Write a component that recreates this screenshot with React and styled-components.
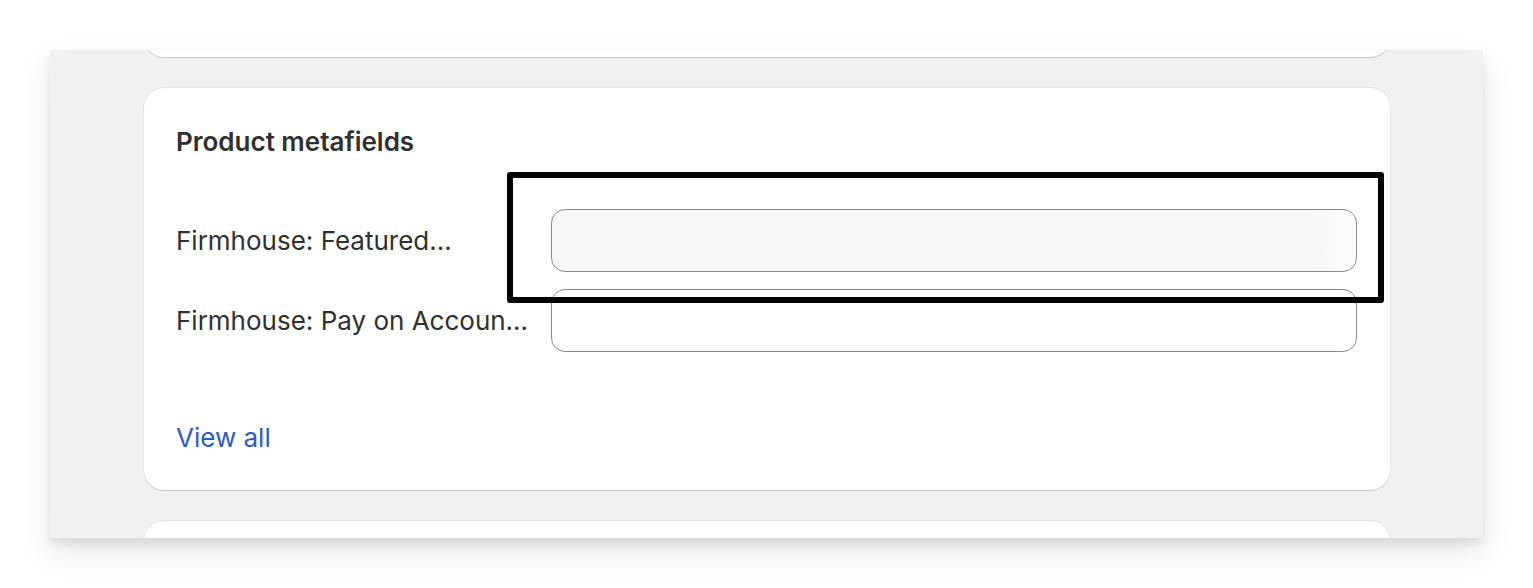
import React from "react";
import styled, { createGlobalStyle } from "styled-components";

const GlobalStyle = createGlobalStyle`
  html, body {
    margin: 0;
    padding: 0;
    background: #ffffff;
    font-family: "Inter", "Noto Sans", sans-serif;
  }
`;

const fields = [
  { label: "Firmhouse: Featured...", filled: true },
  { label: "Firmhouse: Pay on Accoun...", filled: false },
];

const App = () => {
  return (
    <>
      <GlobalStyle />
      <Page>
        <Panel>
          <Stack>
            <Card $peek="top" />
            <Card>
              <Title>Product metafields</Title>
              <FieldList>
                {fields.map((field) => (
                  <FieldRow key={field.label}>
                    <FieldLabel>{field.label}</FieldLabel>
                    <FieldInput $filled={field.filled} />
                  </FieldRow>
                ))}
              </FieldList>
              <ViewAll href="#">View all</ViewAll>
              <Highlight />
            </Card>
            <Card $peek="bottom" />
          </Stack>
        </Panel>
      </Page>
    </>
  );
};

const Page = styled.div`
  width: 1533px;
  height: 588px;
  padding: 50px 50px 0 50px;
  box-sizing: border-box;
  overflow: hidden;
`;

const Panel = styled.div`
  width: 1433px;
  height: 488px;
  background: #f1f1f1;
  overflow: hidden;
  box-shadow: 0 6px 8px rgba(0, 0, 0, 0.08), 0 14px 30px rgba(0, 0, 0, 0.1);
`;

const Stack = styled.div`
  display: flex;
  flex-direction: column;
  gap: 31px;
  padding: 0 93px 0 94px;
  margin-top: -200px;
`;

const Card = styled.div`
  position: relative;
  background: #ffffff;
  border-radius: 20px;
  box-shadow: 0 1px 0 rgba(0, 0, 0, 0.12), 0 0 0 1px rgba(0, 0, 0, 0.05);
  padding: 38px 33px 36px 32px;
  height: ${({ $peek }) => ($peek ? "207px" : "auto")};
  box-sizing: border-box;
`;

const Title = styled.h2`
  margin: 0;
  font-size: 26px;
  line-height: 32px;
  font-weight: 600;
  color: #303030;
`;

const FieldList = styled.div`
  display: flex;
  flex-direction: column;
  gap: 17px;
  margin-top: 51px;
`;

const FieldRow = styled.div`
  display: flex;
  align-items: center;
`;

const FieldLabel = styled.div`
  width: 375px;
  flex-shrink: 0;
  font-size: 26px;
  line-height: 32px;
  color: #303030;
  white-space: nowrap;
`;

const FieldInput = styled.div`
  flex: 1;
  height: 63px;
  box-sizing: border-box;
  border: 1px solid #8a8a8a;
  border-radius: 14px;
  background: ${({ $filled }) =>
    $filled
      ? "linear-gradient(90deg, #f6f6f6 0%, #f6f6f6 94%, #fdfdfd 100%)"
      : "#ffffff"};
`;

const ViewAll = styled.a`
  display: block;
  margin-top: 70px;
  font-size: 26px;
  line-height: 32px;
  color: #2c5cc5;
  text-decoration: none;
`;

const Highlight = styled.div`
  position: absolute;
  left: 363px;
  top: 84px;
  width: 877px;
  height: 131px;
  box-sizing: border-box;
  border: 6px solid #000000;
  border-radius: 3px;
  pointer-events: none;
`;

export default App;
